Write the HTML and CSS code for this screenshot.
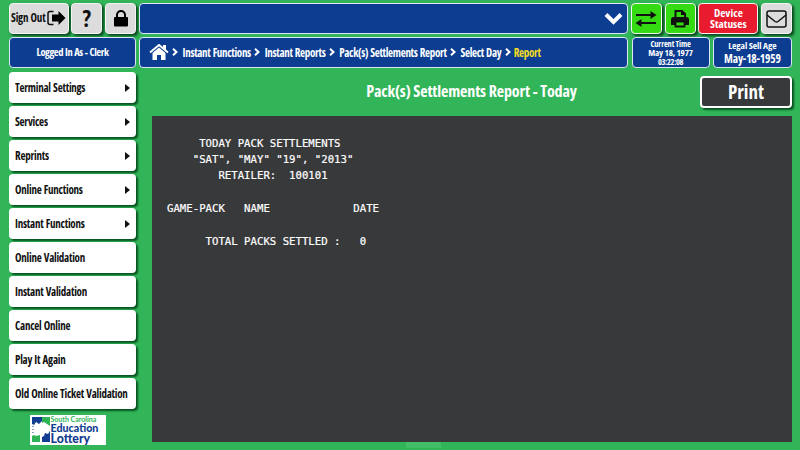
FILE: index.html
```html
<!DOCTYPE html>
<html lang="en">
<head>
<meta charset="utf-8">
<title>Pack(s) Settlements Report</title>
<link rel="stylesheet" href="styles.css">
</head>
<body>
<header class="top">
  <div class="row tools">
    <button class="key signout"><span>Sign Out</span>
      <svg width="19" height="16" viewBox="0 0 19 16"><path d="M6.500 1.500H3Q1 1.500 1 3.500v9Q1 14.500 3 14.500h3.500" fill="none" stroke="#111" stroke-width="1.500"/><path d="M5 4.500h6.500V1L18.500 8 11.500 15v-3.500H5z"/></svg>
    </button>
    <button class="key help"><span>?</span></button>
    <button class="key lock"><svg width="14" height="17" viewBox="0 0 14 17"><path d="M3 8V5a4 4 0 0 1 8 0v3" fill="none" stroke="#000" stroke-width="2"/><rect y="7" width="14" height="9.500" rx="1"/></svg></button>
    <div class="panel message"><svg width="19" height="13" viewBox="0 0 19 13"><path d="M2 2.500l7.500 7.500L17 2.500" fill="none" stroke="#fff" stroke-width="4"/></svg></div>
    <button class="key green"><svg width="22" height="16" viewBox="0 0 22 16"><path d="M1 4h15M21 12H6" stroke="#111" stroke-width="2"/><path d="M15.500 0L21.500 4l-6 4zM6.500 8L.5 12l6 4z" fill="#111"/></svg></button>
    <button class="key green"><svg width="20" height="20" viewBox="0 0 20 20"><path d="M5.500 9V2h6.500l3 3v4" fill="none" stroke="#111" stroke-width="2"/><path d="M11 1v5h5z"/><path d="M1 16V10.500Q1 8 3.500 8h13Q19 8 19 10.500V16z" fill="#111"/><path d="M5.500 12.500h9v5h-9z" fill="#35db12" stroke="#111" stroke-width="1.800"/></svg></button>
    <button class="key red"><span>Device<br>Statuses</span></button>
    <button class="key mail"><svg width="21" height="18" viewBox="0 0 21 18"><rect x="1" y="1" width="19" height="16" rx="2" fill="none" stroke="#111" stroke-width="1.500"/><path d="M1 5l8 6.500q1.500 1 3 0L20 5" fill="none" stroke="#111" stroke-width="1.500"/></svg></button>
  </div>
  <div class="row info">
    <div class="panel user"><span>Logged In As - Clerk</span></div>
    <nav class="panel crumbs">
      <svg class="home" width="20" height="16" viewBox="0 0 20 16"><path d="M1 8.500L10 1l9 7.500" fill="none" stroke="#fff" stroke-width="2"/><path d="M14 1h3v5l-3-2.500zM3.500 9L10 3.500 16.500 9v7H12v-5H8v5H3.500z" fill="#fff"/></svg>
      <svg class="sep" viewBox="0 0 6 8"><path d="M1 .8L4.500 4 1 7.200"/></svg>
      <span>Instant Functions</span>
      <svg class="sep" viewBox="0 0 6 8"><path d="M1 .8L4.500 4 1 7.200"/></svg>
      <span>Instant Reports</span>
      <svg class="sep" viewBox="0 0 6 8"><path d="M1 .8L4.500 4 1 7.200"/></svg>
      <span>Pack(s) Settlements Report</span>
      <svg class="sep" viewBox="0 0 6 8"><path d="M1 .8L4.500 4 1 7.200"/></svg>
      <span>Select Day</span>
      <svg class="sep last" viewBox="0 0 6 8"><path d="M1 .8L4.500 4 1 7.200"/></svg>
      <span class="current">Report</span>
    </nav>
    <div class="panel clock"><span>Current Time</span><span class="day">May 18, 1977</span><span class="hour">03:22:08</span></div>
    <div class="panel age"><span>Legal Sell Age</span><span class="big">May-18-1959</span></div>
  </div>
</header>
<div class="body">
  <aside>
    <ul class="menu">
      <li class="more"><span>Terminal Settings</span></li>
      <li class="more"><span>Services</span></li>
      <li class="more"><span>Reprints</span></li>
      <li class="more"><span>Online Functions</span></li>
      <li class="more"><span>Instant Functions</span></li>
      <li><span>Online Validation</span></li>
      <li><span>Instant Validation</span></li>
      <li><span>Cancel Online</span></li>
      <li><span>Play It Again</span></li>
      <li><span>Old Online Ticket Validation</span></li>
    </ul>
    <div class="logo">
      <svg width="20" height="27" viewBox="0 0 20 27"><path d="M1 1h10v4L8 8 5 6 3 9 1 8z" fill="#123d91"/><path d="M11 1h8v9l-3-2-3-2-2 1z" fill="#2eb457"/><path d="M1 20l2-1 2 1 4-1v7H1z" fill="#2eb457"/><path d="M19 15v11h-8v-5l2-1 1-3 3 1z" fill="#123d91"/><path d="M2 10v8" stroke="#123d91" stroke-dasharray="1 2"/></svg>
      <div class="logotext"><span class="sc">South Carolina</span><span class="ed">Education</span><span class="lo">Lottery</span></div>
    </div>
  </aside>
  <main>
    <div class="heading"><h1>Pack(s) Settlements Report - Today</h1><button class="print"><span>Print</span></button></div>
<pre class="report">     TODAY PACK SETTLEMENTS
    "SAT", "MAY" "19", "2013"
        RETAILER:  100101

GAME-PACK   NAME             DATE

      TOTAL PACKS SETTLED :   0</pre>
    <div class="grip"></div>
  </main>
</div>
</body>
</html>
```
FILE: styles.css
```css
* { box-sizing: border-box; }
body { margin: 0; width: 800px; height: 450px; overflow: hidden; background: #32b559; font: 700 11px/14px "Open Sans", sans-serif; font-stretch: 75%; color: #111; }
span { white-space: nowrap; }
button { font: inherit; color: inherit; padding: 0; margin: 0; }
svg { display: block; flex: none; }
.top { padding: 3px 0 0 9px; }
.row { display: flex; gap: 2.8px; }
.tools { height: 33.500px; }
.key, .panel { height: 31px; display: flex; align-items: center; justify-content: center; border: 1.5px solid #f4f4f4; border-radius: 4px; flex: none; }
.key { width: 31px; background: #dcdcdc; box-shadow: 2px 2px 3px #06401a; }
.panel { background: #0c3d91; color: #fff; border-color: #dfe6f8; }
.signout { width: 59.5px; gap: 2px; padding-bottom: 1px; }
.signout span { letter-spacing: -.2px; word-spacing: .5px; transform: scaleY(1.08); }
.help { font-size: 23px; padding-bottom: 2px; }
.green { background: #35db12; }
.red { width: 59.8px; background: #e81c2e; color: #fff; font-size: 11.3px; line-height: 11.5px; padding-bottom: 1px; }
.message { width: 489.2px; justify-content: flex-end; padding-right: 4px; }
.user { width: 127px; font-size: 10.5px; }
.user span { letter-spacing: -.42px; word-spacing: .5px; transform: scaleY(1.08); }
.crumbs { width: 489.2px; justify-content: flex-start; padding-left: 9px; }
.crumbs span { letter-spacing: -.32px; word-spacing: .5px; transform: scaleY(1.07) translateY(1px); }
.sep { width: 6px; height: 8px; margin: 0 4.3px 0 3.5px; fill: none; stroke: #fff; stroke-width: 2; }
.last { margin-right: 3px; }
.crumbs .current { color: #f5dc23; }
.clock, .age { flex-direction: column; line-height: 9px; font-size: 8.3px; }
.clock { width: 78px; margin-left: .8px; letter-spacing: -.1px; }
.day { font-size: 9px; }
.hour { font-size: 8.3px; letter-spacing: -.3px; }
.age { width: 79px; line-height: 13px; font-size: 9.5px; letter-spacing: -.1px; margin-left: .5px; }
.age .big { font-size: 11.5px; letter-spacing: -.2px; }
.body { display: flex; padding-left: 9px; }
aside { width: 127px; margin-top: 4.5px; }
.menu { list-style: none; margin: 0; padding: 0; display: flex; flex-direction: column; gap: 3px; }
.menu li { height: 31px; background: #fff; border-radius: 4px; box-shadow: 2px 2px 2px #07521f; padding: 0 6px; display: flex; align-items: center; justify-content: space-between; }
.menu span { letter-spacing: -.25px; word-spacing: .6px; transform: scaleY(1.07); }
.more::after { content: ""; border: 4px solid transparent; border-left: 5px solid #111; border-right: 0; }
.logo { width: 76px; height: 30px; margin: 6px 0 0 20.5px; background: #fff; display: flex; padding: 1px 0 0 1px; }
.logotext { display: flex; flex-direction: column; color: #123d91; font: 700 10.7px/10.5px Lato, "Open Sans", sans-serif; font-weight: 900; }
.sc { font-size: 7px; line-height: 7px; color: #2eb457; font-weight: 700; }
.lo { font-size: 12.3px; }
main { margin-left: 16px; width: 640px; }
.heading { height: 48.5px; display: flex; }
h1 { margin: 0; flex: 1; padding-left: 91px; color: #fff; font-size: 16px; line-height: 47px; text-align: center; white-space: nowrap; letter-spacing: -.12px; }
.print { margin-top: 8.5px; width: 92px; height: 32px; flex: none; border: 2px solid #fff; border-radius: 4px; background: #38393b; color: #fff; font-size: 19px; box-shadow: 2px 2px 2px #07521f; }
.report { margin: 0; height: 326px; background: #38393b; color: #fff; font: 10.68px/16.4px "DejaVu Sans Mono", monospace; padding: 19.500px 15px; -webkit-text-stroke: .2px #fff; }
.grip { width: 35px; height: 6px; margin-left: 254px; background: #43be68; }
```
